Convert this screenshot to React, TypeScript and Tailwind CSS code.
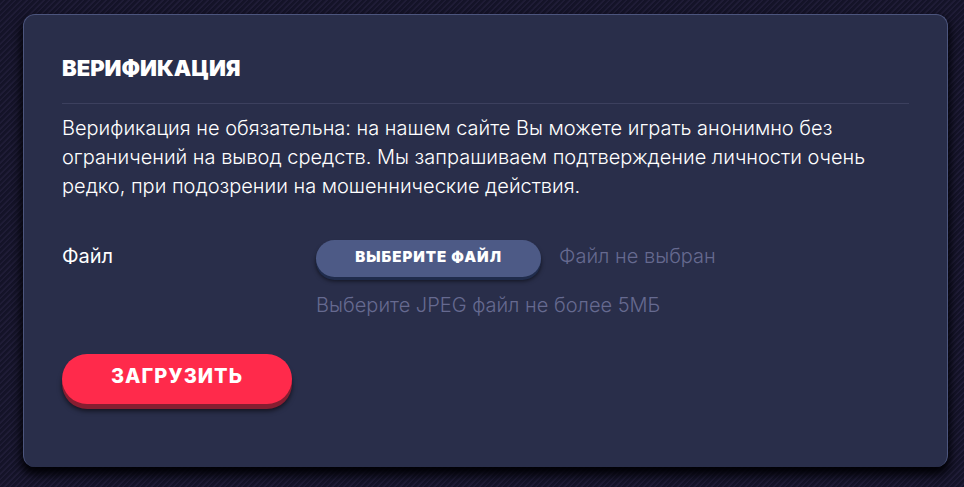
import { useRef, useState } from 'react';
import clsx from 'clsx';

type FilePickerProps = {
  id: string;
  fileName: string;
  onSelect: (name: string) => void;
};

const FilePicker = (props: FilePickerProps) => {
  const { id, fileName, onSelect } = props;
  const inputRef = useRef<HTMLInputElement>(null);

  return (
    <div className="flex flex-wrap items-start gap-x-[18px]">
      <input
        ref={inputRef}
        id={id}
        type="file"
        accept="image/jpeg"
        className="hidden"
        onChange={(e) => onSelect(e.target.files?.[0]?.name || '')}
      />
      <button
        type="button"
        onClick={() => inputRef.current?.click()}
        className="flex h-[37px] w-[225px] cursor-pointer justify-center rounded-full bg-[#4d5a86] pt-1.5 text-[15px] leading-[22px] font-black tracking-[1px] text-white uppercase shadow-[0_3px_0_#202c4c,0_4px_4px_rgba(0,0,0,0.6)]"
      >
        Выберите файл
      </button>
      <span className="text-[#666a90]">{fileName || 'Файл не выбран'}</span>
    </div>
  );
};

const VerificationForm = () => {
  const [fileName, setFileName] = useState('');

  return (
    <form onSubmit={(e) => e.preventDefault()}>
      <div className="grid grid-cols-[3fr_7fr] items-start leading-8">
        <label htmlFor="passport" className="font-normal text-white">
          Файл
        </label>
        <div>
          <FilePicker id="passport" fileName={fileName} onSelect={setFileName} />
          <p className="mt-3 text-[#666a90]">Выберите JPEG файл не более 5МБ</p>
        </div>
      </div>
      <button
        type="submit"
        className={clsx(
          'mt-[33px] flex h-[50px] w-[230px] cursor-pointer justify-center rounded-full bg-[#ff2a4b] pt-2',
          'text-[20px] leading-[29px] font-extrabold tracking-[1px] text-white uppercase',
          'shadow-[0_5px_0_#861e31,0_7px_5px_rgba(0,0,0,0.6)]'
        )}
      >
        Загрузить
      </button>
    </form>
  );
};

const App = () => {
  return (
    <main className="min-h-screen bg-[#161529] bg-[repeating-linear-gradient(135deg,#141328_0px,#141328_2px,#1f1c36_3px,#1f1c36_4px)] pt-[14px] pr-4 pb-5 pl-[23px] font-['Inter','Noto_Sans',sans-serif] text-[20px] leading-[29px] font-light">
      <section className="rounded-xl border border-b-0 border-[#4c557d] bg-[#292e4a] px-[38px] pt-[37px] pb-[63px] shadow-[0_6px_9px_2px_#020207]">
        <h1 className="border-b border-[#3c405e] pb-[19px] text-[22px] leading-8 font-black text-white uppercase">
          Верификация
        </h1>
        <p className="mt-[10px] mb-[39px] text-white">
          Верификация не обязательна: на нашем сайте Вы можете играть анонимно без ограничений на
          вывод средств. Мы запрашиваем подтверждение личности очень редко, при подозрении на
          мошеннические действия.
        </p>
        <VerificationForm />
      </section>
    </main>
  );
};

export default App;
